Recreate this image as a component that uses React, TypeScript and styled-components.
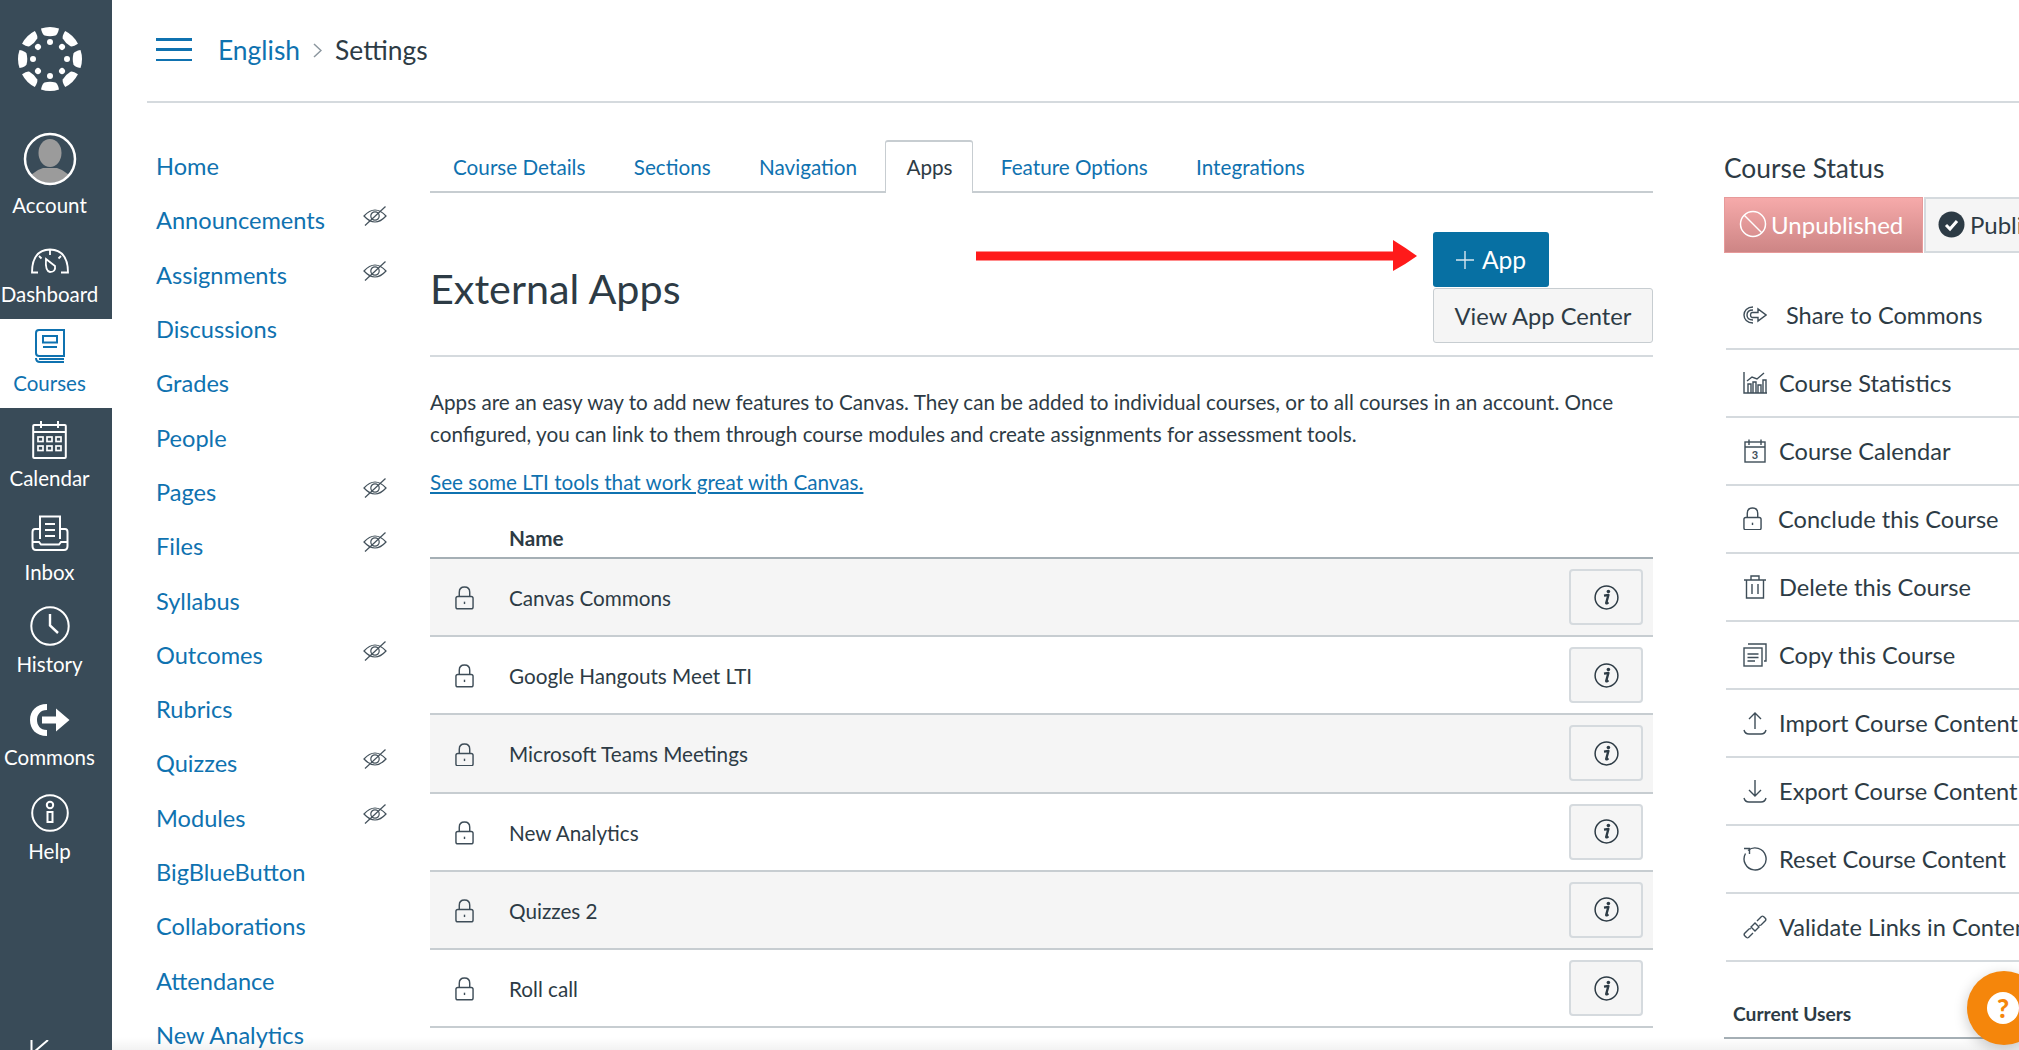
import React from "react";
import styled, { createGlobalStyle } from "styled-components";

const Global = createGlobalStyle`
  html, body { margin: 0; padding: 0; background: #fff; }
  body { font-family: Lato, "Noto Sans", "Liberation Sans", sans-serif; color: #2d3b45; overflow: hidden; }
  a { color: inherit; text-decoration: none; }
`;

const BLUE = "#0f72b0";
const INK = "#2d3b45";
const LINE = "#c7cdd1";

const Page = styled.div`
  position: relative;
  display: grid;
  grid-template-columns: 112px 1fr;
  width: 2019px;
  height: 1050px;
  overflow: hidden;
`;
const Rail = styled.nav`
  display: flex;
  flex-direction: column;
  height: 1050px;
  background: #394b58;
  color: #fff;
`;
const RailLogo = styled.div`
  height: 118px;
  padding-right: 13px;
  box-sizing: border-box;
  display: flex;
  align-items: center;
  justify-content: center;
`;
const RailItem = styled.a<{ $h: number; $gap: number; $active?: boolean }>`
  height: ${(p) => p.$h}px;
  box-sizing: border-box;
  padding: 0 13px 12px 0;
  display: flex;
  flex-direction: column;
  align-items: center;
  justify-content: flex-end;
  background: ${(p) => (p.$active ? "#fff" : "transparent")};
  color: ${(p) => (p.$active ? BLUE : "#fff")};
  font-size: 20.5px;
  line-height: 26px;
  svg { margin-bottom: ${(p) => p.$gap}px; display: block; }
`;
const RailCollapse = styled.div`
  margin-top: auto;
  height: 12px;
  padding-left: 30px;
  overflow: hidden;
`;
const Main = styled.main`
  min-width: 0;
  padding-left: 35px;
`;
const Crumbs = styled.header`
  height: 99px;
  border-bottom: 2px solid #d5dade;
  display: flex;
  align-items: center;
  padding: 0 0 2px 9px;
  font-size: 26.4px;
`;
const Burger = styled.div`
  width: 36px;
  height: 23px;
  margin-right: 26px;
  display: flex;
  flex-direction: column;
  justify-content: space-between;
  span { height: 2.5px; background: ${BLUE}; display: block; }
`;
const CrumbLink = styled.a`
  color: ${BLUE};
`;
const CrumbSep = styled.span`
  margin: 2px 13px 0 13px;
  display: flex;
`;
const Body = styled.div`
  display: grid;
  grid-template-columns: 232px 1223px 295px;
  column-gap: 0;
  margin-left: 9px;
`;
const CourseNav = styled.ul`
  list-style: none;
  margin: 0;
  padding: 36px 0 0;
  width: 232px;
`;
const CourseNavRow = styled.li`
  height: 54.3px;
  display: flex;
  align-items: center;
  justify-content: space-between;
  font-size: 23.6px;
  color: ${BLUE};
  white-space: nowrap;
  svg { margin-bottom: 8px; margin-right: 1px; }
`;
const Center = styled.section`
  grid-column: 2;
  margin-left: 42px;
  margin-right: -42px;
  padding-top: 37px;
  position: relative;
`;
const Tabs = styled.div`
  height: 51px;
  border-bottom: 2px solid ${LINE};
  display: flex;
  gap: 8.3px;
  padding-left: 3px;
`;
const Tab = styled.a<{ $active?: boolean }>`
  height: ${(p) => (p.$active ? 53 : 51)}px;
  box-sizing: border-box;
  padding: 2px 20px 0;
  display: flex;
  align-items: center;
  font-size: 20.7px;
  color: ${(p) => (p.$active ? INK : BLUE)};
  ${(p) => (p.$active ? `background: #fff; padding: 0 19px 1px 20px; border: 1px solid ${LINE}; border-top-width: 2px; border-bottom: 0; border-radius: 3px 3px 0 0;` : "")}
`;
const TitleRow = styled.div`
  display: flex;
  justify-content: space-between;
  align-items: center;
  padding: 39px 0 12px;
  border-bottom: 2px solid #d5dade;
`;
const Title = styled.h1`
  margin: 1px 0 0;
  font-size: 41.3px;
  font-weight: 400;
  color: ${INK};
`;
const TitleActions = styled.div`
  width: 220px;
  display: flex;
  flex-direction: column;
  gap: 1px;
`;
const AddButton = styled.button`
  width: 116px;
  height: 55px;
  border: 0;
  border-radius: 3px;
  background: #0770a3;
  color: #fff;
  font: 400 24.6px Lato, sans-serif;
  display: flex;
  align-items: center;
  justify-content: center;
  gap: 8px;
  padding: 0;
`;
const CenterButton = styled.button`
  height: 55px;
  border: 1px solid ${LINE};
  border-radius: 3px;
  background: #f5f5f5;
  color: ${INK};
  font: 400 23.7px Lato, sans-serif;
  padding: 0;
`;
const Arrow = styled.svg`
  position: absolute;
  left: 546px;
  top: 137px;
`;
const Intro = styled.p`
  margin: 30px 0 0;
  font-size: 20.7px;
  line-height: 31.5px;
  color: ${INK};
`;
const IntroLink = styled.a`
  display: block;
  margin-top: 17px;
  font-size: 20.7px;
  line-height: 31px;
  color: ${BLUE};
  text-decoration: underline;
`;
const TableHead = styled.div`
  height: 43px;
  margin-top: 18px;
  box-sizing: border-box;
  padding: 9px 0 0 79px;
  border-bottom: 2px solid #a5afb5;
  font-size: 20.7px;
  font-weight: 700;
  line-height: 26px;
`;
const Row = styled.div<{ $alt?: boolean }>`
  height: 78.2px;
  box-sizing: border-box;
  display: grid;
  grid-template-columns: 79px 1fr 84px;
  align-items: center;
  font-size: 20.7px;
  background: ${(p) => (p.$alt ? "#f5f5f5" : "#fff")};
  border-bottom: 2px solid ${LINE};
`;
const RowName = styled.span`
  padding-top: 2px;
`;
const RowLock = styled.div`
  display: flex;
  justify-content: center;
  padding: 2px 10px 0 0;
`;
const InfoButton = styled.button`
  width: 74px;
  height: 56px;
  border: 2px solid #d5dade;
  border-radius: 4px;
  background: #f5f5f5;
  display: flex;
  align-items: center;
  justify-content: center;
  padding: 0;
`;
const Side = styled.aside`
  grid-column: 3;
  margin-left: 113px;
  width: 295px;
  overflow: hidden;
  padding-top: 49px;
`;
const SideTitle = styled.h2`
  margin: 0 0 12px;
  font-size: 26.4px;
  line-height: 33px;
  font-weight: 400;
`;
const StatusRow = styled.div`
  display: flex;
  height: 56px;
  margin-bottom: 29px;
`;
const StatusOff = styled.div`
  flex: 0 0 199px;
  box-sizing: border-box;
  display: flex;
  align-items: center;
  padding: 0 0 2px 14px;
  gap: 4px;
  color: #fff;
  font-size: 24px;
  background: linear-gradient(#f6aaaa, #cd8585);
  border: 1px solid #e79a9a;
  svg { flex: none; }
`;
const StatusOn = styled.div`
  flex: 0 0 96px;
  box-sizing: border-box;
  display: flex;
  align-items: center;
  padding: 0 0 2px 12px;
  gap: 5px;
  font-size: 24px;
  background: #f5f5f5;
  border: 2px solid #d5dade;
  border-right: 0;
  white-space: nowrap;
  overflow: hidden;
  margin-left: 1px;
  svg { flex: none; }
`;
const SideLinks = styled.ul`
  list-style: none;
  margin: 0;
  padding: 0;
`;
const SideLink = styled.li<{ $gap?: number }>`
  height: 68px;
  box-sizing: border-box;
  margin-left: 2px;
  padding: 0 0 1px 17px;
  display: flex;
  align-items: center;
  gap: ${(p) => p.$gap ?? 12}px;
  font-size: 23.6px;
  color: ${INK};
  white-space: nowrap;
  border-bottom: 2px solid #d5dade;
  svg { flex: none; }
`;
const UsersHead = styled.div`
  margin-top: 40px;
  height: 37px;
  box-sizing: border-box;
  padding-left: 9px;
  font-size: 19.2px;
  font-weight: 700;
  line-height: 24px;
  border-bottom: 2px solid #a5afb5;
`;
const HelpFab = styled.div`
  position: absolute;
  left: 1967px;
  top: 971px;
  width: 74px;
  height: 74px;
  border-radius: 50%;
  background: #f5860b;
  box-shadow: 0 4px 14px rgba(0, 0, 0, 0.22);
  display: flex;
  align-items: center;
  padding-left: 20px;
  box-sizing: border-box;
`;
const HelpMark = styled.span`
  width: 32px;
  height: 32px;
  border-radius: 50%;
  background: #fff;
  color: #f5860b;
  font: 900 26px/32px Lato, sans-serif;
  text-align: center;
`;
const BottomFade = styled.div`
  position: absolute;
  left: 112px;
  right: 0;
  bottom: 0;
  height: 13px;
  background: linear-gradient(rgba(0, 0, 0, 0), rgba(0, 0, 0, 0.05));
  pointer-events: none;
`;

const Logo = () => (
  <svg width="64" height="64" viewBox="-32 -32 64 64" fill="#fff">
    {[0, 45, 90, 135, 180, 225, 270, 315].map((a) => (
      <g key={a} transform={`rotate(${a})`}>
        <path d="M-9 -30.5 Q0 -33.5 9 -30.5 Q8 -25 5.5 -23.5 Q0 -22 -5.5 -23.5 Q-8 -25 -9 -30.5Z" />
        <circle cx="0" cy="-17" r="3" />
      </g>
    ))}
  </svg>
);
const Avatar = () => (
  <svg width="54" height="54" viewBox="0 0 54 54">
    <defs>
      <clipPath id="avatarClip"><circle cx="27" cy="27" r="24" /></clipPath>
    </defs>
    <circle cx="27" cy="27" r="24" fill="#394b58" />
    <g clipPath="url(#avatarClip)" fill="#9b9b9b">
      <ellipse cx="27" cy="21" rx="11.5" ry="14" />
      <path d="M4 54 Q6 40 20 36 L34 36 Q48 40 50 54Z" />
    </g>
    <circle cx="27" cy="27" r="25" fill="none" stroke="#fff" strokeWidth="2.5" />
  </svg>
);
const Gauge = () => (
  <svg width="38" height="26" viewBox="0 0 38 26" fill="none" stroke="#fff" strokeWidth="1.8">
    <path d="M7 24.5 H1 Q1 2 19 1.5 Q37 2 37 24.5 H30" />
    <path d="M15 11 L24 18 Q25 24 19 24 Q14 23 15 11Z" />
    <path d="M19 2 V7 M8 8 L10.5 10.5 M30 8 L27.5 10.5" />
  </svg>
);
const Book = () => (
  <svg width="30" height="35" viewBox="0 0 30 35" fill="none" stroke={BLUE} strokeWidth="2">
    <path d="M29 27 H4 Q1 27 1 24 V4 Q1 1 4 1 H29 Z" />
    <path d="M1 29 Q1 33 5 33 H29 M4 30 H29" />
    <rect x="8" y="7" width="14" height="6.5" />
    <path d="M8 18 H22" />
  </svg>
);
const BigCalendar = () => (
  <svg width="35" height="39" viewBox="0 0 35 39" fill="none" stroke="#fff" strokeWidth="2">
    <rect x="1.2" y="5" width="32.6" height="33" rx="1" />
    <path d="M9 1 V8 M26 1 V8 M1 12 H34" strokeWidth="2" />
    <g strokeWidth="1.7">
      <rect x="6" y="17" width="5" height="4.5" /><rect x="15" y="17" width="5" height="4.5" /><rect x="24" y="17" width="5" height="4.5" />
      <rect x="6" y="26" width="5" height="4.5" /><rect x="15" y="26" width="5" height="4.5" /><rect x="24" y="26" width="5" height="4.5" />
    </g>
  </svg>
);
const Inbox = () => (
  <svg width="38" height="36" viewBox="0 0 38 36" fill="none" stroke="#fff" strokeWidth="2">
    <path d="M9 24 V1.5 H29 V24" />
    <path d="M14 9 H24 M14 15 H24 M14 21 H24" />
    <path d="M9 14 H4 Q1.5 14 1.5 17 V31 Q1.5 35 5 35 H33 Q36.5 35 36.5 31 V17 Q36.5 14 34 14 H29" />
    <path d="M2 27 H8 L10 29.5 H28 L30 27 H36" />
  </svg>
);
const Clock = () => (
  <svg width="40" height="40" viewBox="0 0 40 40" fill="none" stroke="#fff" strokeWidth="2">
    <circle cx="20" cy="20" r="18.7" />
    <path d="M20 8 V19.5 L28 27" strokeWidth="2.4" />
  </svg>
);
const CommonsBold = () => (
  <svg width="40" height="32" viewBox="0 0 40 32" fill="#fff">
    <path d="M17 0 C6 0 0 7 0 16 C0 25 6 32 17 32 V26 C10 26 7 21 7 16 C7 11 10 6 17 6Z" />
    <path d="M12 12.5 H26 V4.5 L39.5 16 L26 27.5 V19.5 H12Z" />
  </svg>
);
const HelpIcon = () => (
  <svg width="38" height="38" viewBox="0 0 38 38" fill="none" stroke="#fff" strokeWidth="2">
    <circle cx="19" cy="19" r="17.8" />
    <circle cx="19" cy="11" r="3.2" />
    <rect x="16.5" y="18" width="5" height="10" />
  </svg>
);
const Collapse = () => (
  <svg width="20" height="14" viewBox="0 0 20 14" fill="none" stroke="#fff" strokeWidth="2">
    <path d="M1.5 0 V14 M18 0 L4 12 L10 18" />
  </svg>
);
const Chevron = () => (
  <svg width="9" height="15" viewBox="0 0 9 15" fill="none" stroke="#8b969e" strokeWidth="1.5">
    <path d="M1 1 L8 7.5 L1 14" />
  </svg>
);
const EyeOff = () => (
  <svg width="24" height="20" viewBox="0 0 24 20" fill="none" stroke="#44525c" strokeWidth="1.2">
    <path d="M1 10 Q12 -2 23 10 Q12 22 1 10Z" />
    <circle cx="12" cy="10" r="4.2" />
    <path d="M2 19.5 L22.5 0.5" />
  </svg>
);
const Lock = ({ size = 19 }: { size?: number }) => (
  <svg width={size} height={size * 1.25} viewBox="0 0 20 25" fill="none" stroke="#3e4d58" strokeWidth="1.5">
    <path d="M4.5 11 V6.5 Q4.5 1 10 1 Q15.5 1 15.5 6.5 V11" />
    <rect x="1" y="11" width="18" height="13" rx="2" />
    <path d="M10 16.5 V19" />
  </svg>
);
const InfoIcon = () => (
  <svg width="25" height="25" viewBox="0 0 25 25" fill="none">
    <circle cx="12.5" cy="12.5" r="11.4" stroke={INK} strokeWidth="1.5" />
    <path d="M10 10.6 L14.4 10 L12.2 18 Q12.4 18.9 14.4 17.3" stroke={INK} strokeWidth="2.4" strokeLinejoin="round" />
    <circle cx="14.4" cy="6.5" r="1.8" fill={INK} />
  </svg>
);
const NoEntry = () => (
  <svg width="28" height="28" viewBox="0 0 28 28" fill="none" stroke="#fff" strokeWidth="1.5">
    <circle cx="14" cy="14" r="12.5" />
    <path d="M5 5 L23 23" />
  </svg>
);
const CheckBadge = () => (
  <svg width="27" height="27" viewBox="0 0 27 27">
    <circle cx="13.5" cy="13.5" r="13" fill={INK} />
    <path d="M8 14 L12 18 L19 10" fill="none" stroke="#fff" strokeWidth="3" />
  </svg>
);
const si = { fill: "none", stroke: "#3e4d58", strokeWidth: 1.4 };
const ShareIcon = () => (
  <svg width="24" height="18" viewBox="0 0 24 18" {...si}>
    <path d="M10 1 C4 1 1 5 1 9 C1 13 4 17 10 17" />
    <path d="M10 4 C6 4 4 6 4 9 C4 12 6 14 10 14" />
    <path d="M9 6.5 H15 V3 L23 9 L15 15 V11.5 H9 C7 11 7 7 9 6.5Z" />
  </svg>
);
const StatsIcon = () => (
  <svg width="24" height="22" viewBox="0 0 24 22" {...si}>
    <path d="M1 0 V21 H24" />
    <path d="M4 9 L9 5 L14 7 L21 1" />
    <path d="M5 21 V12 H8 V21 M10 21 V10 H13 V21 M15 21 V13 H18 V21 M20 21 V8 H23 V21" />
  </svg>
);
const CalendarSmall = () => (
  <svg width="24" height="24" viewBox="0 0 24 24" {...si}>
    <rect x="2" y="3" width="20" height="20" />
    <path d="M6 0.5 V6 M18 0.5 V6 M2 8 H22" />
    <text x="12" y="20" textAnchor="middle" fontFamily="Lato, sans-serif" fontSize="11" fontWeight="700" fill="#3e4d58" stroke="none">3</text>
  </svg>
);
const TrashIcon = () => (
  <svg width="24" height="24" viewBox="0 0 24 24" {...si}>
    <path d="M1 5 H23 M8 5 V1 H16 V5 M3.5 5 V23 H20.5 V5 M9 9 V19 M15 9 V19" />
  </svg>
);
const CopyIcon = () => (
  <svg width="24" height="24" viewBox="0 0 24 24" {...si}>
    <rect x="1" y="5" width="18" height="18" />
    <path d="M5 1 H23 V18 H21 M4.5 11 H15.5 M4.5 14.5 H15.5 M4.5 18 H12" />
  </svg>
);
const ImportIcon = () => (
  <svg width="24" height="24" viewBox="0 0 24 24" {...si}>
    <path d="M12 18 V2 M6 8 L12 2 L18 8 M1 19 Q2 23 6 23 H18 Q22 23 23 19" />
  </svg>
);
const ExportIcon = () => (
  <svg width="24" height="24" viewBox="0 0 24 24" {...si}>
    <path d="M12 1 V17 M6 11 L12 17 L18 11 M1 19 Q2 23 6 23 H18 Q22 23 23 19" />
  </svg>
);
const ResetIcon = () => (
  <svg width="24" height="24" viewBox="0 0 24 24" {...si}>
    <path d="M5 3.5 A11 11 0 1 1 2.5 6.5" />
    <path d="M1 1.5 H6.5 V7" />
  </svg>
);
const LinkIcon = () => (
  <svg width="24" height="24" viewBox="0 0 24 24" {...si}>
    <path d="M14 6 L18.5 1.5 Q19.5 0.8 20.5 1.5 L22.5 3.5 Q23.2 4.5 22.5 5.5 L18 10 Q17 10.7 16 10 M10 18 L5.5 22.5 Q4.5 23.2 3.5 22.5 L1.5 20.5 Q0.8 19.5 1.5 18.5 L6 14 Q7 13.3 8 14" />
    <path d="M8 12 L12 8 L16 12 L12 16Z" />
  </svg>
);

const railItems: [string, number, number, React.ReactNode, boolean?][] = [
  ["Account", 112, 6, <Avatar />],
  ["Dashboard", 89, 7, <Gauge />],
  ["Courses", 89, 6, <Book />, true],
  ["Calendar", 95, 6, <BigCalendar />],
  ["Inbox", 94, 8, <Inbox />],
  ["History", 92, 5, <Clock />],
  ["Commons", 93, 8, <CommonsBold />],
  ["Help", 94, 6, <HelpIcon />],
];
const navItems: [string, boolean][] = [
  ["Home", false], ["Announcements", true], ["Assignments", true], ["Discussions", false],
  ["Grades", false], ["People", false], ["Pages", true], ["Files", true], ["Syllabus", false],
  ["Outcomes", true], ["Rubrics", false], ["Quizzes", true], ["Modules", true],
  ["BigBlueButton", false], ["Collaborations", false], ["Attendance", false], ["New Analytics", false],
];
const tabs = ["Course Details", "Sections", "Navigation", "Apps", "Feature Options", "Integrations"];
const apps = ["Canvas Commons", "Google Hangouts Meet LTI", "Microsoft Teams Meetings", "New Analytics", "Quizzes 2", "Roll call"];
const sideLinks: [string, React.ReactNode, number?][] = [
  ["Share to Commons", <ShareIcon />, 19],
  ["Course Statistics", <StatsIcon />],
  ["Course Calendar", <CalendarSmall />],
  ["Conclude this Course", <Lock size={19} />, 16],
  ["Delete this Course", <TrashIcon />],
  ["Copy this Course", <CopyIcon />],
  ["Import Course Content", <ImportIcon />],
  ["Export Course Content", <ExportIcon />],
  ["Reset Course Content", <ResetIcon />],
  ["Validate Links in Content", <LinkIcon />],
];

export default function App() {
  return (
    <Page>
      <Global />
      <Rail>
        <RailLogo><Logo /></RailLogo>
        {railItems.map(([label, h, gap, icon, active]) => (
          <RailItem key={label} $h={h} $gap={gap} $active={active}>
            {icon}
            {label}
          </RailItem>
        ))}
        <RailCollapse><Collapse /></RailCollapse>
      </Rail>
      <Main>
        <Crumbs>
          <Burger><span /><span /><span /></Burger>
          <CrumbLink>English</CrumbLink>
          <CrumbSep><Chevron /></CrumbSep>
          <span>Settings</span>
        </Crumbs>
        <Body>
          <CourseNav>
            {navItems.map(([label, hidden]) => (
              <CourseNavRow key={label}>
                {label}
                {hidden && <EyeOff />}
              </CourseNavRow>
            ))}
          </CourseNav>
          <Center>
            <Tabs>
              {tabs.map((t) => (
                <Tab key={t} $active={t === "Apps"}>{t}</Tab>
              ))}
            </Tabs>
            <Arrow width="442" height="32" viewBox="0 0 442 32">
              <path d="M0 11.5 H417 V0 Q430 8 441 16 Q430 24 417 31 V20.5 H0Z" fill="#ff1a1a" />
            </Arrow>
            <TitleRow>
              <Title>External Apps</Title>
              <TitleActions>
                <AddButton>
                  <svg width="18" height="18" viewBox="0 0 18 18" stroke="#d8e6ef" strokeWidth="1.4"><path d="M9 0 V18 M0 9 H18" /></svg>
                  App
                </AddButton>
                <CenterButton>View App Center</CenterButton>
              </TitleActions>
            </TitleRow>
            <Intro>
              Apps are an easy way to add new features to Canvas. They can be added to individual courses, or to all courses in an account. Once configured, you can link to them through course modules and create assignments for assessment tools.
            </Intro>
            <IntroLink>See some LTI tools that work great with Canvas.</IntroLink>
            <TableHead>Name</TableHead>
            {apps.map((a, i) => (
              <Row key={a} $alt={i % 2 === 0}>
                <RowLock><Lock /></RowLock>
                <RowName>{a}</RowName>
                <InfoButton><InfoIcon /></InfoButton>
              </Row>
            ))}
          </Center>
          <Side>
            <SideTitle>Course Status</SideTitle>
            <StatusRow>
              <StatusOff><NoEntry />Unpublished</StatusOff>
              <StatusOn><CheckBadge />Publish</StatusOn>
            </StatusRow>
            <SideLinks>
              {sideLinks.map(([label, icon, gap]) => (
                <SideLink key={label} $gap={gap}>{icon}{label}</SideLink>
              ))}
            </SideLinks>
            <UsersHead>Current Users</UsersHead>
          </Side>
        </Body>
      </Main>
      <BottomFade />
      <HelpFab><HelpMark>?</HelpMark></HelpFab>
    </Page>
  );
}
